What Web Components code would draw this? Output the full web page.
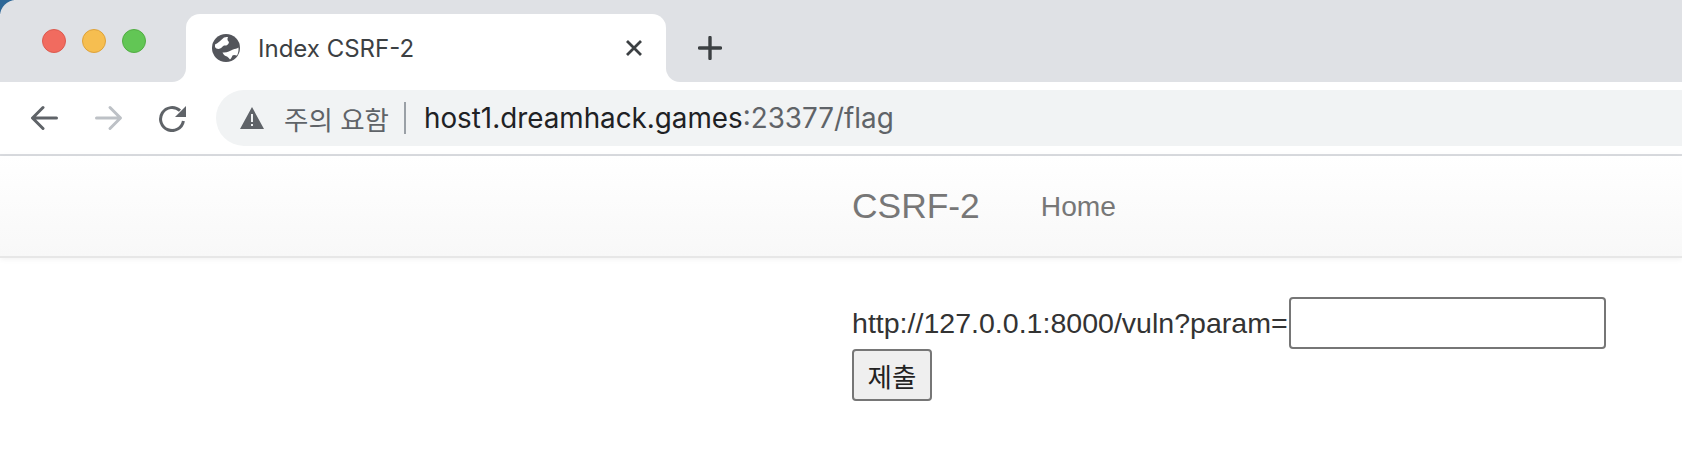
<!DOCTYPE html>
<html lang="ko">
<head>
<meta charset="utf-8">
<title>Index CSRF-2</title>
<style>
	html, body { margin: 0; background: #fff; }
	body { font-family: "Liberation Sans", "Noto Sans CJK KR", sans-serif; }
</style>
</head>
<body>
<browser-tabs title-text="Index CSRF-2"></browser-tabs>
<browser-toolbar></browser-toolbar>
<site-navbar brand="CSRF-2" link="Home"></site-navbar>
<flag-form prefix="http://127.0.0.1:8000/vuln?param=" submit="제출"></flag-form>

<script>
(function () {
	class BrowserTabs extends HTMLElement {
		constructor() {
			super();
			this.attachShadow({ mode: "open" }).innerHTML = `
			<style>
				:host {
					display: flex;
					height: 82px;
					background: linear-gradient(135deg, #2d6797 0, #2d6797 10px, #fff 10px);
				}
				.left {
					width: 186px;
					background: #dfe1e5;
					border-top-left-radius: 16px;
					border-bottom-right-radius: 14px;
					display: flex;
					align-items: center;
					gap: 16px;
					padding-left: 42px;
					box-sizing: border-box;
				}
				.dot { width: 22px; height: 22px; border-radius: 50%; border: 1px solid; }
				.red { background: #f16b5f; border-color: #dc5a4f; }
				.yellow { background: #f6be50; border-color: #dea23a; }
				.green { background: #62c655; border-color: #52ad43; }
				.middle { width: 480px; background: #dfe1e5; padding-top: 14px; box-sizing: border-box; }
				.tab {
					height: 68px;
					background: #fff;
					border-radius: 14px 14px 0 0;
					display: flex;
					align-items: center;
					padding: 0 23px 0 26px;
					box-sizing: border-box;
					color: #3c4043;
					font: 24px Inter, sans-serif;
				}
				.tab svg.globe { width: 28px; height: 28px; margin-right: 18px; }
				.tab span { flex: 1; }
				.right {
					flex: 1;
					background: #dfe1e5;
					border-bottom-left-radius: 14px;
					display: flex;
					align-items: center;
					padding: 14px 0 0 32px;
				}
			</style>
			<div class="left">
				<div class="dot red"></div>
				<div class="dot yellow"></div>
				<div class="dot green"></div>
			</div>
			<div class="middle">
				<div class="tab">
					<svg class="globe" viewBox="0 0 28 28">
						<circle cx="14" cy="14" r="14" fill="#53555b"/>
						<path d="M3 10.500C6 9 9 6 12 3.500C14 2.500 15.500 3 16 3C15 5 15.500 7 17 8C16.500 11 14 12 12 11.500C10 13 9 14.500 6.500 15C5 15 3.500 14 3 13Z" fill="#fff"/>
						<path d="M10.500 18.500C15 19 18 17 21 15.500C23 15 25 14.500 26.500 13.500C26.800 17 26 19.500 25 21.500C23 21 21.500 20.500 20.500 21.500C20 23 19 24.500 18 25.500C17 24 16 23 15 22.500C13 22 11.500 21 10.500 18.500Z" fill="#fff"/>
					</svg>
					<span id="title"></span>
					<svg width="18" height="18" viewBox="0 0 18 18"><path d="M2 2l14 14M16 2L2 16" stroke="#3c4043" stroke-width="2.8" fill="none"/></svg>
				</div>
			</div>
			<div class="right">
				<svg width="24" height="24" viewBox="0 0 24 24"><path d="M12 1.500v21M1.500 12h21" stroke="#3c4043" stroke-width="3.4" stroke-linecap="round" fill="none"/></svg>
			</div>`;
		}

		connectedCallback() {
			this.shadowRoot.getElementById("title").textContent = this.getAttribute("title-text");
		}
	}

	class BrowserToolbar extends HTMLElement {
		constructor() {
			super();
			this.attachShadow({ mode: "open" }).innerHTML = `
			<style>
				:host {
					display: flex;
					height: 74px;
					padding: 8px 0 0 31px;
					box-sizing: border-box;
					border-bottom: 2px solid #dadce0;
					background: #fff;
				}
				.nav { width: 28px; height: 28px; margin-top: 14px; flex: none; }
				.forward { margin-left: 36px; }
				.reload { margin-left: 36px; margin-top: 14px; }
				.omnibox {
					flex: 1;
					height: 56px;
					margin-left: 29px;
					background: #f1f3f4;
					border-radius: 28px 0 0 28px;
					display: flex;
					align-items: center;
					padding-left: 24px;
					font-family: Inter, "Noto Sans CJK KR", sans-serif;
				}
				.warn { margin-right: 20px; }
				.label { color: #5f6368; font-size: 26.5px; }
				.sep { width: 2px; height: 32px; background: #9aa0a6; margin: 0 18px 0 15px; }
				.host { color: #202124; font-size: 27.8px; }
				.rest { color: #5f6368; font-size: 27.8px; }
			</style>
			<svg class="nav" viewBox="0 0 28 28"><path d="M25.500 14H3M12 3.500L1.500 14 12 24.500" stroke="#5f6368" stroke-width="3" stroke-linecap="round" stroke-linejoin="round" fill="none"/></svg>
			<svg class="nav forward" viewBox="0 0 28 28"><path d="M1.500 14H24M15 3.500L25.500 14 15 24.500" stroke="#bdc1c6" stroke-width="3" stroke-linecap="round" stroke-linejoin="round" fill="none"/></svg>
			<svg class="nav reload" viewBox="0 0 28 28"><path d="M21 6.700A11.500 11.500 0 1 0 24.400 17" stroke="#5f6368" stroke-width="3" fill="none"/><path d="M27 2v11H16z" fill="#5f6368"/></svg>
			<div class="omnibox">
				<svg class="warn" width="24" height="22" viewBox="0 0 24 22"><path fill-rule="evenodd" d="M12 0l12 22H0zM11 7v8h2V7zM11 17v2h2v-2z" fill="#5f6368"/></svg>
				<span class="label">주의 요함</span>
				<span class="sep"></span>
				<span class="host">host1.dreamhack.games</span><span class="rest">:23377/flag</span>
			</div>`;
		}
	}

	class SiteNavbar extends HTMLElement {
		constructor() {
			super();
			this.attachShadow({ mode: "open" }).innerHTML = `
			<style>
				:host {
					display: flex;
					align-items: center;
					height: 102px;
					padding-left: 852px;
					box-sizing: border-box;
					background: linear-gradient(#fff, #f8f8f8);
					border-bottom: 2px solid #e7e7e7;
					box-shadow: 0 1px 6px rgba(0,0,0,.06);
					color: #777;
				}
				.brand { font-size: 35.4px; margin-right: 61px; }
				.link { font-size: 28.2px; }
			</style>
			<span class="brand" id="brand"></span>
			<span class="link" id="link"></span>`;
		}

		connectedCallback() {
			this.shadowRoot.getElementById("brand").textContent = this.getAttribute("brand");
			this.shadowRoot.getElementById("link").textContent = this.getAttribute("link");
		}
	}

	class FlagForm extends HTMLElement {
		constructor() {
			super();
			this.attachShadow({ mode: "open" }).innerHTML = `
			<style>
				:host {
					display: block;
					padding: 39px 0 0 852px;
					color: #333;
					font-size: 28.55px;
				}
				.row { display: flex; align-items: center; height: 52px; }
				input {
					width: 317px;
					height: 52px;
					box-sizing: border-box;
					border: 2px solid #767676;
					border-radius: 4px;
					background: #fff;
					padding: 0;
					margin: 0 0 0 1px;
				}
				button {
					display: block;
					width: 80px;
					height: 52px;
					box-sizing: border-box;
					margin-top: 0;
					padding: 0;
					border: 2px solid #767676;
					border-radius: 4px;
					background: #efefef;
					color: #222;
					font: 26.5px "Noto Sans CJK KR", sans-serif;
				}
			</style>
			<div class="row"><span id="prefix"></span><input type="text"></div>
			<button type="button" id="submit"></button>`;
		}

		connectedCallback() {
			this.shadowRoot.getElementById("prefix").textContent = this.getAttribute("prefix");
			this.shadowRoot.getElementById("submit").textContent = this.getAttribute("submit");
		}
	}

	customElements.define("browser-tabs", BrowserTabs);
	customElements.define("browser-toolbar", BrowserToolbar);
	customElements.define("site-navbar", SiteNavbar);
	customElements.define("flag-form", FlagForm);
})();
</script>
</body>
</html>
